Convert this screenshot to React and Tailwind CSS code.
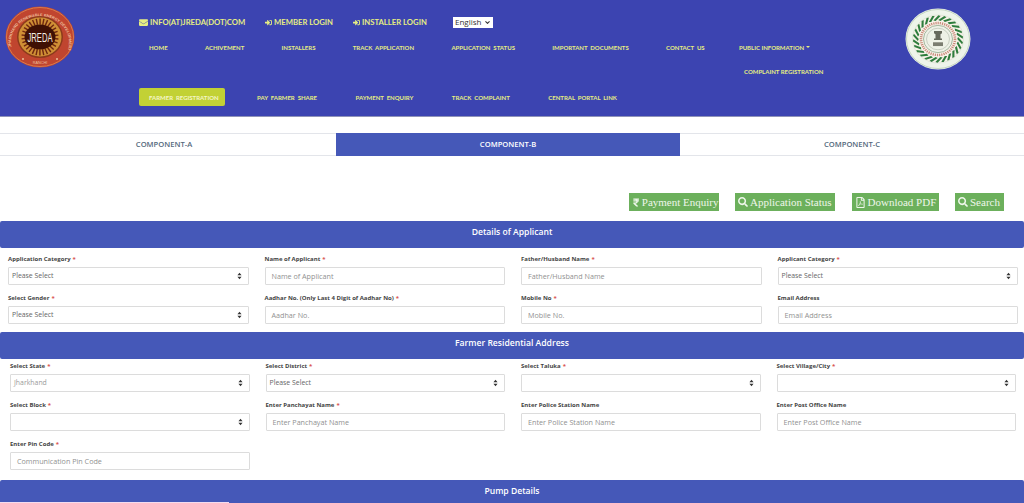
import React from "react"
import { ChevronDown } from "lucide-react"
import { FaEnvelope, FaSignInAlt, FaSearch, FaRupeeSign, FaRegFilePdf } from "react-icons/fa"

const topNav = ["HOME", "ACHIVEMENT", "INSTALLERS", "TRACK  APPLICATION", "APPLICATION  STATUS", "IMPORTANT  DOCUMENTS", "CONTACT  US"]
const subNav = ["PAY  FARMER  SHARE", "PAYMENT  ENQUIRY", "TRACK  COMPLAINT", "CENTRAL  PORTAL  LINK"]

function JredaLogo() {
  const spokes = Array.from({ length: 30 }, (_, i) => i * 12)
  return (
    <svg width="70" height="62" viewBox="0 0 70 62" className="shrink-0">
      <ellipse cx="35" cy="31" rx="34.500" ry="30.500" fill="#c0452f" />
      <ellipse cx="35" cy="31" rx="33.500" ry="29.500" fill="none" stroke="#d97a4c" strokeWidth="1" />
      <path id="jr-ring" d="M7 43A29 26 0 1 1 63 43" fill="none" />
      <text fontSize="3.900" fill="#edbf9c" fontFamily="Liberation Sans, sans-serif" fontWeight="700">
        <textPath href="#jr-ring" startOffset="2">JHARKHAND RENEWABLE ENERGY DEVELOPMENT AGENCY</textPath>
      </text>
      <ellipse cx="35" cy="31" rx="23" ry="21" fill="#8c3a1c" />
      <ellipse cx="35" cy="31" rx="21.500" ry="19.500" fill="#cf8f35" />
      {spokes.map((a) => (
        <rect key={a} x="34.400" y="12.500" width="1.400" height="6" fill="#6e2610" transform={`rotate(${a} 35 31)`} />
      ))}
      <ellipse cx="35" cy="31" rx="15.500" ry="12.500" fill="#3f1004" />
      <text x="35" y="36" textAnchor="middle" fontSize="13" fill="#f5efe3" fontFamily="Liberation Sans, sans-serif" textLength="25" lengthAdjust="spacingAndGlyphs">JREDA</text>
      <text x="35" y="58" textAnchor="middle" fontSize="3.800" fill="#edbf9c" fontFamily="Liberation Sans, sans-serif">RANCHI</text>
      <circle cx="18" cy="53" r="1" fill="#edbf9c" />
      <circle cx="52" cy="53" r="1" fill="#edbf9c" />
    </svg>
  )
}

function StateEmblem() {
  const leaves = Array.from({ length: 26 }, (_, i) => i * (360 / 26))
  return (
    <svg width="66" height="62" viewBox="0 0 66 62">
      <ellipse cx="33" cy="31" rx="32.500" ry="30.500" fill="#eef4ea" />
      <ellipse cx="33" cy="31" rx="31.500" ry="29.500" fill="none" stroke="#a9c2a6" strokeWidth="0.600" />
      <g transform="translate(33 31) scale(1 0.94) translate(-33 -33)">
        <circle cx="33" cy="33" r="25.500" fill="#f6f2e8" stroke="#c7d0bd" strokeWidth="0.400" />
        {leaves.map((a) => (
          <rect key={a} x="31.800" y="8.500" width="2.400" height="6.500" fill="#2f7d3d" transform={`rotate(${a} 33 33) skewX(-28)`} />
        ))}
        <circle cx="33" cy="33" r="17" fill="none" stroke="#c9897a" strokeWidth="2.600" strokeDasharray="1.200 1" />
        <circle cx="33" cy="33" r="14.500" fill="#eef1e6" stroke="#7f9a7c" strokeWidth="0.700" />
        <circle cx="33" cy="33" r="11.500" fill="none" stroke="#9ea898" strokeWidth="0.500" />
        <path d="M29 24.500h8v2.500l-1.500 1v4.500h1.500v1.500h-8v-1.500h1.500V28l-1.500-1z" fill="#67695c" />
        <path d="M28 36.500h10v4h-10z" fill="#7b7d70" />
      </g>
    </svg>
  )
}

function Updown() {
  return (
    <svg width="5" height="8" viewBox="0 0 6 9" className="shrink-0">
      <path d="M3 0.500 5.500 3.500H0.500zM3 8.500 0.500 5.500H5.500z" fill="#333" />
    </svg>
  )
}

function Label({ text, req }) {
  return (
    <div className="h-[14px] mb-px flex items-center text-[6px] font-bold text-[#444] whitespace-nowrap">
      {text}
      {req && <span className="text-[#d9534f] ml-[2px]">*</span>}
    </div>
  )
}

function Field({ label, req, placeholder }) {
  return (
    <div className="min-w-0">
      <Label text={label} req={req} />
      <div className="h-[18px] border border-[#dcdcdc] rounded-[1px] bg-white flex items-center px-[6px] text-[7.2px] text-[#919191] whitespace-nowrap">
        {placeholder}
      </div>
    </div>
  )
}

function SelectField({ label, req, value, muted }) {
  return (
    <div className="min-w-0">
      <Label text={label} req={req} />
      <div className={`h-[18px] border border-[#dcdcdc] rounded-[1px] bg-white flex items-center justify-between pl-[3px] pr-[6px] text-[6.9px] whitespace-nowrap ${muted ? "text-[#9a9a9a]" : "text-[#666]"}`}>
        <span>{value}</span>
        <Updown />
      </div>
    </div>
  )
}

function SectionBar({ title }) {
  return (
    <div className="h-[27px] pb-[4px] bg-[#4558b8] rounded-[2px] flex items-center justify-center text-white text-[8.6px] font-semibold">
      {title}
    </div>
  )
}

function GreenButton({ icon, width, children }) {
  return (
    <div className={`h-[18px] bg-[#6cb05c] text-[#eef6ea] flex items-center gap-[2px] pl-[3px] text-[11px] whitespace-nowrap ${width}`} style={{ fontFamily: "Liberation Serif, serif" }}>
      {icon}
      {children}
    </div>
  )
}

export default function App() {
  return (
    <div className="relative h-[503px] overflow-hidden bg-white" style={{ fontFamily: "'Open Sans', sans-serif" }}>
      {/* header */}
      <div className="h-[117px] bg-[#3c44b1] border-b border-[#8f93b8] flex" style={{ fontFamily: "Lato, sans-serif" }}>
        <div className="w-[139px] shrink-0 pl-[5px] pt-[6px]">
          <JredaLogo />
        </div>
        <div className="flex-1 min-w-0 relative">
          <div className="h-[35px] pt-[10px] flex items-center text-[#e6ee82] text-[7.700px] font-bold whitespace-nowrap">
            <FaEnvelope size={9} />
            <span className="ml-[2px] w-[115px]">INFO(AT)JREDA(DOT)COM</span>
            <FaSignInAlt size={7} />
            <span className="ml-[2px] w-[79px]">MEMBER LOGIN</span>
            <FaSignInAlt size={7} />
            <span className="ml-[2px] w-[65px]">INSTALLER LOGIN</span>
            <div className="ml-[26px] -mt-[1px] w-[40px] h-[11px] bg-white text-[#333] text-[8px] font-normal flex items-center justify-between px-[2px]" style={{ fontFamily: "'Open Sans', sans-serif" }}>
              English
              <ChevronDown size={7} strokeWidth={3.500} />
            </div>
          </div>
          <div className="mt-[7px] h-[10px] flex items-center pl-[10px] gap-[37.300px] text-[#e6ee82] text-[6px] font-bold whitespace-pre">
            {topNav.map((n) => (
              <span key={n}>{n}</span>
            ))}
            <span className="-ml-[3px] flex items-center gap-[2px]">
              PUBLIC INFORMATION
              <span className="w-0 h-0 border-x-[2px] border-x-transparent border-t-[2px] border-t-[#e6ee82]" />
            </span>
          </div>
          <div className="mt-[14px] h-[10px] flex items-center pl-[605px] text-[#e6ee82] text-[6px] font-bold whitespace-nowrap">
            COMPLAINT REGISTRATION
          </div>
          <div className="mt-[12px] flex items-center text-[#e6ee82] text-[6px] font-bold whitespace-pre">
            <span className="w-[86px] h-[18px] bg-[#c2d135] text-[#f4f6c8] rounded-[2px] flex items-center pl-[10px]">FARMER  REGISTRATION</span>
            <div className="flex items-center gap-[38.500px] pl-[32px]">
              {subNav.map((n) => (
                <span key={n}>{n}</span>
              ))}
            </div>
          </div>
        </div>
        <div className="absolute left-[905px] top-[8px]">
          <StateEmblem />
        </div>
      </div>

      {/* component tabs */}
      <div className="mt-[16px] h-[23px] flex border-y border-[#e3e5ea] text-[7.600px] text-[#55697c] font-semibold">
        <div className="w-[336px] pr-[8px] flex items-center justify-center">COMPONENT-A</div>
        <div className="w-[344px] flex items-center justify-center bg-[#4558b8] text-white -my-px">COMPONENT-B</div>
        <div className="flex-1 flex items-center justify-center">COMPONENT-C</div>
      </div>

      {/* action buttons */}
      <div className="mt-[37px] flex justify-end gap-[16.500px] pr-[20px]">
        <GreenButton width="w-[90px]" icon={<FaRupeeSign size={9} />}>Payment Enquiry</GreenButton>
        <GreenButton width="w-[100px]" icon={<FaSearch size={10} />}>Application Status</GreenButton>
        <GreenButton width="w-[87px]" icon={<FaRegFilePdf size={11} />}>Download PDF</GreenButton>
        <GreenButton width="w-[49px]" icon={<FaSearch size={10} />}>Search</GreenButton>
      </div>

      <div className="mt-[10px]">
        <SectionBar title="Details of Applicant" />
      </div>
      <div className="pl-2 pr-[6px] pt-[4px] grid grid-cols-4 gap-x-4 gap-y-[6px]">
        <SelectField label="Application Category" req value="Please Select" />
        <Field label="Name of Applicant" req placeholder="Name of Applicant" />
        <Field label="Father/Husband Name" req placeholder="Father/Husband Name" />
        <SelectField label="Applicant Category" req value="Please Select" />
        <SelectField label="Select Gender" req value="Please Select" />
        <Field label="Aadhar No. (Only Last 4 Digit of Aadhar No)" req placeholder="Aadhar No." />
        <Field label="Mobile No" req placeholder="Mobile No." />
        <Field label="Email Address" placeholder="Email Address" />
      </div>

      <div className="mt-[8px]">
        <SectionBar title="Farmer Residential Address" />
      </div>
      <div className="pl-[10px] pr-2 grid grid-cols-4 gap-x-4 gap-y-[6px]">
        <SelectField label="Select State" req value="Jharkhand" muted />
        <SelectField label="Select District" req value="Please Select" />
        <SelectField label="Select Taluka" req value="" />
        <SelectField label="Select Village/City" req value="" />
        <SelectField label="Select Block" req value="" />
        <Field label="Enter Panchayat Name" req placeholder="Enter Panchayat Name" />
        <Field label="Enter Police Station Name" placeholder="Enter Police Station Name" />
        <Field label="Enter Post Office Name" placeholder="Enter Post Office Name" />
        <Field label="Enter Pin Code" req placeholder="Communication Pin Code" />
      </div>

      <div className="mt-[10px]">
        <SectionBar title="Pump Details" />
      </div>
      <div className="absolute left-0 bottom-0 w-[229px] h-px bg-[#f3dcef]" />
    </div>
  )
}
